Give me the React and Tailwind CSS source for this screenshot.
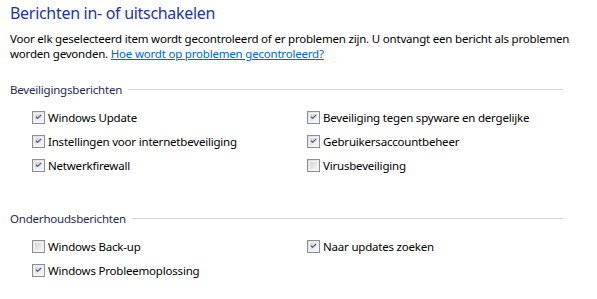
import { Check } from "lucide-react";

const font = { fontFamily: '"Noto Sans", "Open Sans", sans-serif' };

function Box({ checked }) {
  return (
    <span className="flex h-[13px] w-[13px] shrink-0 items-center justify-center border border-[#8f8f8f] bg-gradient-to-br from-[#dcdcdc] to-[#fbfbfb] p-[1px]">
      <span className="flex h-full w-full items-center justify-center border border-[#f4f4f4] bg-gradient-to-br from-[#d2d4d8] to-[#f6f6f6]">
        {checked ? <Check className="h-[10px] w-[10px] text-[#4a5f97]" strokeWidth={4} /> : null}
      </span>
    </span>
  );
}

function Item({ label, checked }) {
  return (
    <label className="flex h-[24px] items-center gap-[3px]">
      <Box checked={checked} />
      <span>{label}</span>
    </label>
  );
}

function Section({ title, left, right }) {
  return (
    <div>
      <div className="flex h-[16px] items-center">
        <span className="text-[#1e2a4e]">{title}</span>
        <span className="ml-[6px] mr-[24px] h-px flex-1 bg-[#d5d5d5]" />
      </div>
      <div className="mt-[8px] grid grid-cols-[275px_1fr] pl-[22px]">
        <div>
          {left.map((i) => (
            <Item key={i[0]} label={i[0]} checked={i[1]} />
          ))}
        </div>
        <div>
          {right.map((i) => (
            <Item key={i[0]} label={i[0]} checked={i[1]} />
          ))}
        </div>
      </div>
    </div>
  );
}

export default function App() {
  return (
    <div className="h-[299px] w-[597px] bg-white px-[10px] pt-[2px] text-[11.5px] leading-[15px] tracking-[-0.2px] text-black" style={font}>
      <div className="text-[16px] leading-[22px] tracking-[-0.3px] text-[#1e3796]">Berichten in- of uitschakelen</div>
      <p className="mt-[7px]">
        Voor elk geselecteerd item wordt gecontroleerd of er problemen zijn. U ontvangt een bericht als problemen worden gevonden.{" "}
        <a href="#" className="text-[#0066cc] underline">Hoe wordt op problemen gecontroleerd?</a>
      </p>
      <div className="mt-[20px]">
        <Section
          title="Beveiligingsberichten"
          left={[["Windows Update", true], ["Instellingen voor internetbeveiliging", true], ["Netwerkfirewall", true]]}
          right={[["Beveiliging tegen spyware en dergelijke", true], ["Gebruikersaccountbeheer", true], ["Virusbeveiliging", false]]}
        />
      </div>
      <div className="mt-[33px]">
        <Section
          title="Onderhoudsberichten"
          left={[["Windows Back-up", false], ["Windows Probleemoplossing", true]]}
          right={[["Naar updates zoeken", true]]}
        />
      </div>
    </div>
  );
}
